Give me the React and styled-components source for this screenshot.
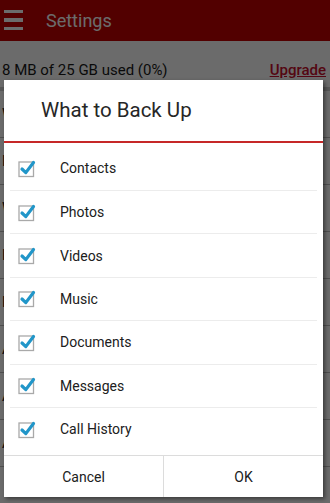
import React from "react";
import styled, { createGlobalStyle } from "styled-components";

const GlobalStyle = createGlobalStyle`
  html, body {
    margin: 0;
    padding: 0;
    width: 330px;
    height: 503px;
    overflow: hidden;
    font-family: Roboto, "Noto Sans", Arial, sans-serif;
  }
`;

const Screen = styled.div`
  position: relative;
  width: 330px;
  height: 503px;
  background: #ffffff;
  overflow: hidden;
`;

const AppBar = styled.div`
  display: flex;
  align-items: center;
  height: 41px;
  background: #c40000;
  padding-left: 4px;
  gap: 23px;
`;

const MenuIcon = styled.div`
  display: flex;
  flex-direction: column;
  gap: 5px;
  width: 19px;
  margin-top: -1px;
  span {
    display: block;
    height: 3.5px;
    background: #ffffff;
  }
`;

const BarTitle = styled.div`
  color: #ffffff;
  font-size: 18px;
`;

const Storage = styled.div`
  display: flex;
  justify-content: space-between;
  align-items: baseline;
  padding: 20px 4px 0 2px;
  font-size: 15px;
  color: #1a1a1a;
`;

const Upgrade = styled.span`
  color: #c8102e;
  font-weight: 500;
  text-decoration: underline;
`;

const Progress = styled.div`
  height: 4px;
  margin: 8px 0 0;
  background: #cfcfcf;
`;

const BgList = styled.div`
  display: flex;
  flex-direction: column;
`;

const BgItem = styled.div`
  padding: 14px 2px;
  font-size: 15px;
  color: #111;
  border-bottom: 1px solid #bdbdbd;
`;

const Dim = styled.div`
  position: absolute;
  inset: 0;
  background: rgba(0, 0, 0, 0.58);
`;

const Dialog = styled.div`
  position: absolute;
  left: 4px;
  top: 80px;
  width: 319px;
  height: 417px;
  display: flex;
  flex-direction: column;
  background: #ffffff;
  box-shadow: 2px 2px 4px rgba(0, 0, 0, 0.45);
`;

const DialogTitle = styled.div`
  height: 61px;
  display: flex;
  align-items: center;
  padding-left: 37px;
  font-size: 20.5px;
  color: #262626;
  border-bottom: 2px solid #c62828;
`;

const OptionList = styled.div`
  flex: 1;
  display: flex;
  flex-direction: column;
  padding: 4px 6px 5px;
`;

const Option = styled.div`
  height: 43.4px;
  flex: 0 0 auto;
  display: flex;
  align-items: center;
  gap: 23px;
  padding-left: 8px;
  box-sizing: border-box;
  border-top: ${(p) => (p.$first ? "none" : "1px solid #ececec")};
  font-size: 14px;
  color: #202020;
`;

const ButtonBar = styled.div`
  height: 41px;
  display: flex;
  border-top: 1px solid #dcdcdc;
`;

const DialogButton = styled.div`
  flex: 1;
  display: flex;
  align-items: center;
  justify-content: center;
  font-size: 14px;
  color: #202020;
  border-left: ${(p) => (p.$divider ? "1px solid #dcdcdc" : "none")};
`;

const CheckIcon = () => (
  <svg width="19" height="19" viewBox="0 0 19 19">
    <rect x="1" y="3" width="14.5" height="14.5" fill="#fff" stroke="#a9a9a9" strokeWidth="1.3" />
    <path d="M4 10 L7.8 13.6 L15.5 3.5" fill="none" stroke="#2196c9" strokeWidth="3.2" strokeLinecap="round" strokeLinejoin="round" />
  </svg>
);

const options = ["Contacts", "Photos", "Videos", "Music", "Documents", "Messages", "Call History"];
const bgItems = ["Wi-Fi only", "Back up now", "What to back up", "Last backup", "Backup schedule", "Account", "Advanced", "About"];

export default function App() {
  return (
    <Screen>
      <GlobalStyle />
      <AppBar>
        <MenuIcon>
          <span />
          <span />
          <span />
        </MenuIcon>
        <BarTitle>Settings</BarTitle>
      </AppBar>
      <Storage>
        <span>8 MB of 25 GB used (0%)</span>
        <Upgrade>Upgrade</Upgrade>
      </Storage>
      <Progress />
      <BgList>
        {bgItems.map((t) => (
          <BgItem key={t}>{t}</BgItem>
        ))}
      </BgList>
      <Dim />
      <Dialog>
        <DialogTitle>What to Back Up</DialogTitle>
        <OptionList>
          {options.map((o, i) => (
            <Option key={o} $first={i === 0}>
              <CheckIcon />
              {o}
            </Option>
          ))}
        </OptionList>
        <ButtonBar>
          <DialogButton>Cancel</DialogButton>
          <DialogButton $divider>OK</DialogButton>
        </ButtonBar>
      </Dialog>
    </Screen>
  );
}
